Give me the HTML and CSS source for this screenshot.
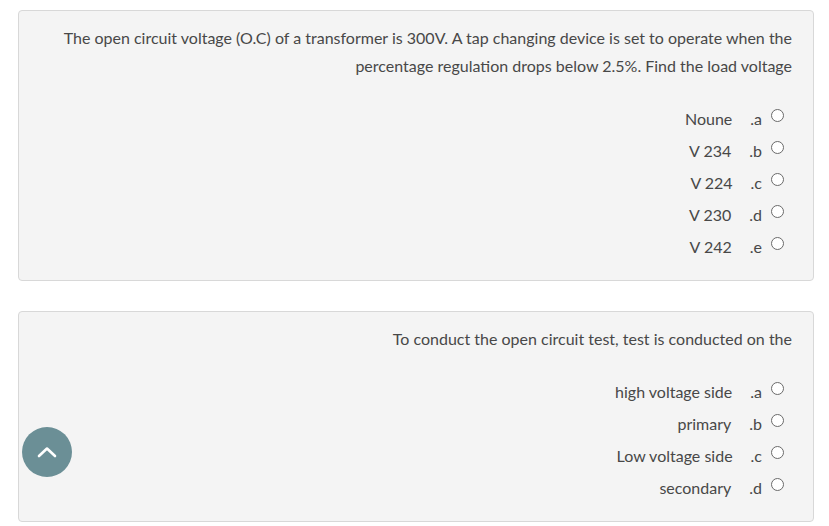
FILE: index.html
```html
<!DOCTYPE html>
<html lang="ar">
<head>
<meta charset="utf-8">
<link rel="stylesheet" href="styles.css">
</head>
<body>
<div class="page">
  <div class="card q1">
    <div class="qtext">The open circuit voltage (O.C) of a transformer is 300V. A tap changing device is set to operate when the<br>percentage regulation drops below 2.5%. Find the load voltage</div>
    <div class="answers">
      <div class="opt"><span class="lbl">Noune</span><span class="let">.a</span><span class="radio"></span></div>
      <div class="opt"><span class="lbl">V 234</span><span class="let">.b</span><span class="radio"></span></div>
      <div class="opt"><span class="lbl">V 224</span><span class="let">.c</span><span class="radio"></span></div>
      <div class="opt"><span class="lbl">V 230</span><span class="let">.d</span><span class="radio"></span></div>
      <div class="opt"><span class="lbl">V 242</span><span class="let">.e</span><span class="radio"></span></div>
    </div>
  </div>
  <div class="card q2">
    <div class="qtext">To conduct the open circuit test, test is conducted on the</div>
    <div class="answers">
      <div class="opt"><span class="lbl">high voltage side</span><span class="let">.a</span><span class="radio"></span></div>
      <div class="opt"><span class="lbl">primary</span><span class="let">.b</span><span class="radio"></span></div>
      <div class="opt"><span class="lbl">Low voltage side</span><span class="let">.c</span><span class="radio"></span></div>
      <div class="opt"><span class="lbl">secondary</span><span class="let">.d</span><span class="radio"></span></div>
    </div>
  </div>
</div>
<a class="totop" href="#"><svg width="20" height="12" viewBox="0 0 20 12"><path d="M2 10 L10 2.5 L18 10" fill="none" stroke="#fff" stroke-width="2.6" stroke-linecap="round" stroke-linejoin="round"/></svg></a>
</body>
</html>
```
FILE: styles.css
```css
html, body { margin: 0; padding: 0; background: #fff; }
body {
  font-family: "Source Sans Pro", Lato, "Liberation Sans", sans-serif;
  font-size: 16px;
  color: #484848;
  width: 829px;
  height: 526px;
  overflow: hidden;
}
.page {
  padding: 10px 15px 0 18px;
  display: flex;
  flex-direction: column;
  gap: 30px;
}
.card {
  background: #f4f4f4;
  border: 1px solid #d8d8d8;
  border-radius: 4px;
  padding: 13px 21px 18px 21px;
}
.qtext {
  text-align: right;
  line-height: 28px;
}
.answers {
  margin-top: 22px;
  display: flex;
  flex-direction: column;
  align-items: flex-end;
  padding-right: 8px;
}
.opt {
  height: 32px;
  display: flex;
  align-items: center;
  justify-content: flex-end;
}
.lbl { margin-right: 18px; }
.let { margin-right: 9px; }
.radio {
  width: 11px;
  height: 11px;
  border: 1px solid #6a6a6a;
  border-radius: 50%;
  background: #fff;
  margin-top: -5px;
}
.totop {
  position: fixed;
  left: 22px;
  top: 427px;
  width: 50px;
  height: 50px;
  border-radius: 50%;
  background: #6b8f96;
  display: flex;
  align-items: center;
  justify-content: center;
}
```
